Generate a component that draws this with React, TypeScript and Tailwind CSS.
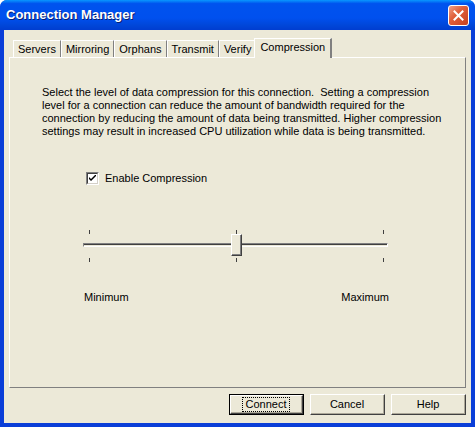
import React from 'react'

const tabs = ['Servers', 'Mirroring', 'Orphans', 'Transmit', 'Verify']

function Tick() {
  return <div className="w-px h-[4px] bg-[#404040]" />
}

function Button({ label, primary }: { label: string; primary?: boolean }) {
  return (
    <div
      className={
        'w-[75px] h-[21px] ' +
        (primary ? 'border border-black' : '')
      }
    >
      <div className="w-full h-full border-t border-l border-white border-r border-b border-r-[#404040] border-b-[#404040] bg-[#ECE9D8]">
        <div className="w-full h-full border-r border-b border-r-[#ACA899] border-b-[#ACA899] flex items-center justify-center">
          {primary ? (
            <span className="px-[3px] leading-[13px] outline outline-1 outline-dotted outline-black outline-offset-0">
              {label}
            </span>
          ) : (
            <span className="leading-[13px]">{label}</span>
          )}
        </div>
      </div>
    </div>
  )
}

export default function App() {
  return (
    <div className="w-[475px] h-[427px] flex flex-col bg-[#0A3ED8] rounded-t-[7px] overflow-hidden font-['Liberation_Sans',Arial,sans-serif] text-[11px] text-black">
      {/* title bar */}
      <div className="h-[30px] shrink-0 flex items-center justify-between pl-[6px] pr-[6px] bg-[linear-gradient(to_bottom,#0997FF_0%,#0053EE_12%,#0050EE_60%,#0046D8_85%,#003DD0_100%)]">
        <span className="text-white font-bold text-[13px] [text-shadow:1px_1px_0_#0A1E6E]">
          Connection Manager
        </span>
        <div className="w-[21px] h-[21px] mt-[1px] rounded-[3px] border border-white bg-[linear-gradient(135deg,#F0A088_0%,#E0603C_40%,#C6401F_100%)] flex items-center justify-center">
          <svg width="11" height="11" viewBox="0 0 11 11">
            <path d="M1.5 1.5 L9.5 9.5 M9.5 1.5 L1.5 9.5" stroke="white" strokeWidth="2" strokeLinecap="square" />
          </svg>
        </div>
      </div>

      {/* client area */}
      <div className="flex-1 mx-[4px] mb-[4px] bg-[#ECE9D8] flex flex-col px-[5px]">
        {/* tabs */}
        <div className="h-[27px] flex items-end pl-[4px]">
          {tabs.map((t) => (
            <div
              key={t}
              className="h-[17px] px-[4px] flex items-center border-t border-l border-white bg-[#ECE9D8] border-r border-r-[#808080]"
            >
              <span className="leading-[13px] pt-[1px]">{t}</span>
            </div>
          ))}
          <div className="relative -ml-[2px] h-[20px] px-[5px] flex items-start pt-[2px] border-t border-l border-white border-r-2 border-r-[#808080] bg-[#ECE9D8] mb-[-1px] z-10">
            <span className="leading-[13px]">Compression</span>
          </div>
        </div>

        {/* panel */}
        <div className="h-[331px] border-t border-l border-white border-r border-b border-r-[#808080] border-b-[#808080] flex flex-col">
          <p className="pl-[32px] pt-[28px] leading-[13px] whitespace-pre">
            {'Select the level of data compression for this connection.  Setting a compression\nlevel for a connection can reduce the amount of bandwidth required for the\nconnection by reducing the amount of data being transmitted. Higher compression\nsettings may result in increased CPU utilization while data is being transmitted.'}
          </p>

          <div className="mt-[34px] ml-[76px] flex items-center gap-[6px]">
            <div className="w-[13px] h-[13px] border-t border-l border-[#808080] border-r border-b border-r-white border-b-white">
              <div className="w-full h-full border-t border-l border-[#404040] border-r border-b border-r-[#D4D0C8] border-b-[#D4D0C8] bg-white flex items-center justify-center">
                <svg width="7" height="7" viewBox="0 0 7 7">
                  <path d="M0 2 L0 4 L2 6 L7 1 L7 -1 L2 4 Z" fill="black" />
                </svg>
              </div>
            </div>
            <span className="leading-[13px]">Enable Compression</span>
          </div>

          {/* slider */}
          <div className="relative mt-[45px] ml-[73px] w-[305px] flex flex-col">
            <div className="flex justify-between px-[6px] pr-[4px]">
              <Tick />
              <div className="ml-[-1px]"><Tick /></div>
              <Tick />
            </div>
            <div className="mt-[9px] h-[4px] border-t border-l border-[#808080] border-b border-r border-b-white border-r-white bg-[#ECE9D8]">
              <div className="h-full border-t border-[#404040]" />
            </div>
            <div className="mt-[11px] flex justify-between px-[6px] pr-[4px]">
              <Tick />
              <div className="ml-[-1px]"><Tick /></div>
              <Tick />
            </div>
            <div className="absolute left-[148px] top-[4px] w-[11px] h-[22px] border-t border-l border-white border-r border-b border-r-[#404040] border-b-[#404040] bg-[#ECE9D8]">
              <div className="w-full h-full border-r border-b border-r-[#808080] border-b-[#808080]" />
            </div>
          </div>

          <div className="mt-[29px] ml-[74px] w-[305px] flex justify-between leading-[13px]">
            <span>Minimum</span>
            <span>Maximum</span>
          </div>
        </div>

        {/* buttons */}
        <div className="mt-[6px] flex justify-end gap-[6px]">
          <Button label="Connect" primary />
          <Button label="Cancel" />
          <Button label="Help" />
        </div>
      </div>
    </div>
  )
}
